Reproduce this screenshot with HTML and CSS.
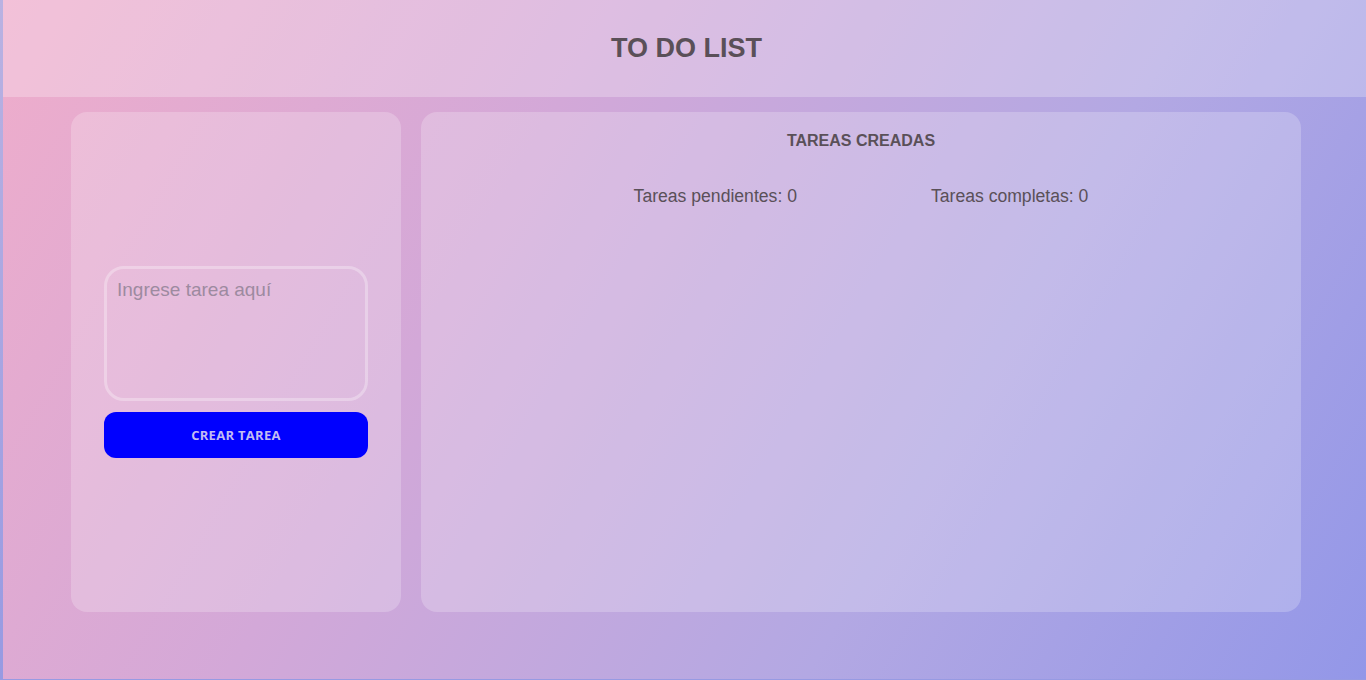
FILE: index.html
```html
<!DOCTYPE html>
<html lang="es">
<head>
<meta charset="utf-8">
<title>To Do List</title>
<link rel="stylesheet" href="styles.css">
</head>
<body>
<div class="page">
  <header class="header">
    <h1 class="title">TO DO LIST</h1>
  </header>
  <main class="main">
    <section class="card card-form">
      <textarea class="task-input" placeholder="Ingrese tarea aquí"></textarea>
      <button class="btn" type="button">CREAR TAREA</button>
    </section>
    <section class="card card-list">
      <h2 class="list-title">TAREAS CREADAS</h2>
      <div class="counters">
        <span class="counter">Tareas pendientes: 0</span>
        <span class="counter">Tareas completas: 0</span>
      </div>
    </section>
  </main>
</div>
</body>
</html>
```
FILE: styles.css
```css
html {
  height: 100%;
  background: linear-gradient(to bottom, #bab2e2, #979ae2);
}
body {
  margin: 0 0 0 3px;
  height: 100%;
  font-family: "Liberation Sans", Arial, sans-serif;
  color: #5a5058;
}
.page {
  height: 679px;
  background: linear-gradient(120deg, #efadcb 0%, #d3a8d8 35%, #b3a8e3 68%, #9397e8 100%);
  display: flex;
  flex-direction: column;
}
.header {
  height: 97px;
  background: rgba(255, 255, 255, 0.25);
  display: flex;
  align-items: center;
  justify-content: center;
}
.title {
  margin: 0;
  font-size: 27px;
  font-weight: bold;
  color: #5a5058;
  position: relative;
  left: 2px;
}
.main {
  display: flex;
  gap: 20px;
  padding: 15px 0 0 68px;
}
.card {
  height: 500px;
  border-radius: 16px;
  background: rgba(255, 255, 255, 0.22);
  box-sizing: border-box;
}
.card-form {
  width: 330px;
  display: flex;
  flex-direction: column;
  align-items: center;
  justify-content: center;
  gap: 11px;
}
.task-input {
  width: 264px;
  height: 135px;
  box-sizing: border-box;
  border: 3px solid rgba(255, 255, 255, 0.3);
  border-radius: 20px;
  background: transparent;
  padding: 10px 10px;
  font-family: "Liberation Sans", Arial, sans-serif;
  font-size: 19px;
  color: #5a5058;
  resize: none;
  outline: none;
}
.task-input::placeholder {
  color: #9d8aa0;
}
.btn {
  width: 264px;
  height: 46px;
  border: none;
  border-radius: 12px;
  background: #0000ff;
  color: #c3bcf2;
  font-family: "Open Sans", sans-serif;
  font-weight: bold;
  font-size: 13px;
  letter-spacing: 0.3px;
  cursor: pointer;
}
.card-list {
  width: 880px;
  display: flex;
  flex-direction: column;
  align-items: center;
  padding-top: 20px;
}
.list-title {
  margin: 0;
  font-size: 16px;
  font-weight: bold;
  color: #5a5058;
}
.counters {
  display: flex;
  gap: 134px;
  margin-top: 36px;
  font-size: 17.6px;
}
```
